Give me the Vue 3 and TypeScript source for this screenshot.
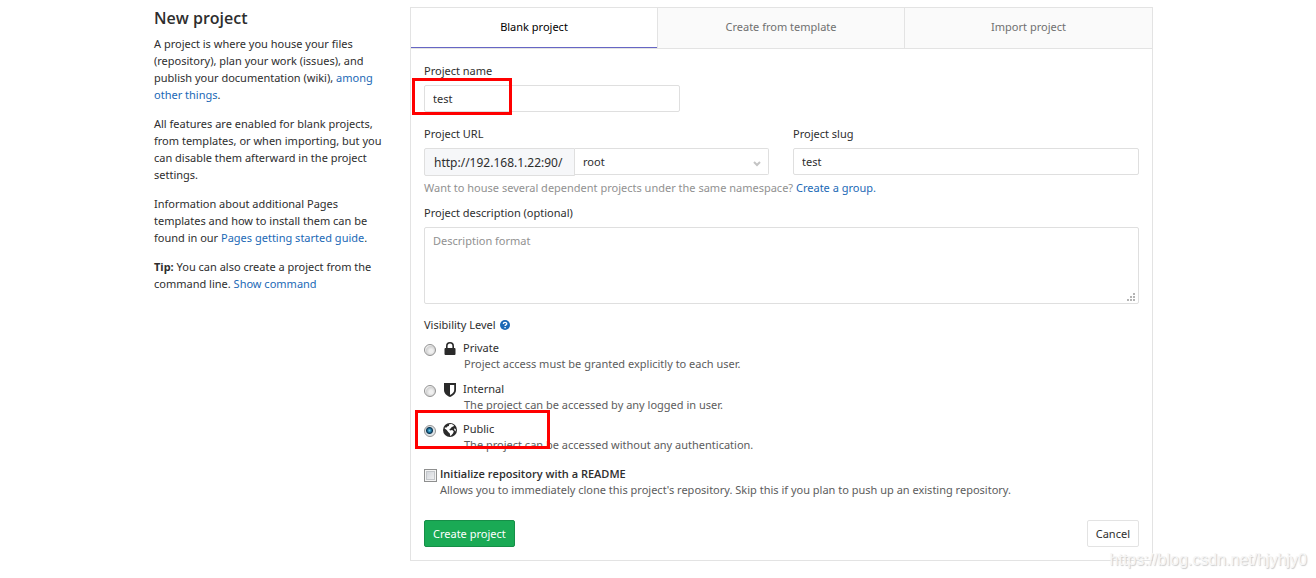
<script setup lang="ts">
import { ref } from 'vue'

interface VisibilityOption {
  value: string
  title: string
  description: string
}

const tabs: string[] = ['Blank project', 'Create from template', 'Import project']
const activeTab = ref<string>(tabs[0])

const projectName = ref<string>('test')
const projectSlug = ref<string>('test')
const namespace = ref<string>('root')
const description = ref<string>('')
const visibility = ref<string>('public')
const withReadme = ref<boolean>(false)

const options: VisibilityOption[] = [
  { value: 'private', title: 'Private', description: 'Project access must be granted explicitly to each user.' },
  { value: 'internal', title: 'Internal', description: 'The project can be accessed by any logged in user.' },
  { value: 'public', title: 'Public', description: 'The project can be accessed without any authentication.' },
]
</script>

<template>
  <div class="page">
    <main class="layout">
      <aside class="intro">
        <h1>New project</h1>
        <p>
          A project is where you house your files (repository), plan your work (issues), and publish your
          documentation (wiki), <a href="#">among other things</a>.
        </p>
        <p>
          All features are enabled for blank projects, from templates, or when importing, but you can disable
          them afterward in the project settings.
        </p>
        <p>
          Information about additional Pages templates and how to install them can be found in our
          <a href="#">Pages getting started guide</a>.
        </p>
        <p><strong>Tip:</strong> You can also create a project from the command line. <a href="#">Show command</a></p>
      </aside>

      <section class="panel">
        <div class="tabs" role="tablist">
          <button
            v-for="tab in tabs"
            :key="tab"
            type="button"
            role="tab"
            class="tab"
            :class="{ active: tab === activeTab }"
            :aria-selected="tab === activeTab"
            @click="activeTab = tab"
          >{{ tab }}</button>
        </div>

        <form class="body" @submit.prevent>
          <div class="field name-field">
            <label for="name">Project name</label>
            <input id="name" v-model="projectName" class="control" type="text" />
            <span class="mark mark-name"></span>
          </div>

          <div class="row">
            <div class="field url-field">
              <label for="namespace">Project URL</label>
              <div class="group">
                <span class="prefix">http://192.168.1.22:90/</span>
                <div class="select-wrap">
                  <select id="namespace" v-model="namespace" class="control">
                    <option value="root">root</option>
                  </select>
                  <svg class="chevron" viewBox="0 0 8 6" aria-hidden="true">
                    <path d="M1 1l3 3 3-3" fill="none" stroke="#c4c4c4" stroke-width="2" />
                  </svg>
                </div>
              </div>
            </div>
            <div class="field slug-field">
              <label for="slug">Project slug</label>
              <input id="slug" v-model="projectSlug" class="control" type="text" />
            </div>
          </div>

          <p class="help">
            Want to house several dependent projects under the same namespace? <a href="#">Create a group.</a>
          </p>

          <div class="field area-field">
            <label for="description">Project description (optional)</label>
            <textarea id="description" v-model="description" class="control" placeholder="Description format"></textarea>
            <svg class="grip" viewBox="0 0 8 8" aria-hidden="true">
              <path
                d="M6 0h2v2H6zM3 3h2v2H3zM6 3h2v2H6zM0 6h2v2H0zM3 6h2v2H3zM6 6h2v2H6z"
                fill="#b4b4b4"
              />
            </svg>
          </div>

          <fieldset class="visibility">
            <legend>
              Visibility Level
              <a href="#" class="question" aria-label="Help">
                <svg viewBox="0 0 10 10" aria-hidden="true">
                  <circle cx="5" cy="5" r="5" fill="#1b69b6" />
                  <path d="M3.3 3.9C3.4 1.8 6.8 1.9 6.7 3.9 6.7 4.9 5.1 4.9 5.1 6.1" fill="none" stroke="#fff" stroke-width="1.4" />
                  <path d="M4.4 6.9h1.4v1.3H4.4z" fill="#fff" />
                </svg>
              </a>
            </legend>
            <div v-for="option in options" :key="option.value" class="option">
              <input :id="option.value" v-model="visibility" type="radio" name="visibility" :value="option.value" />
              <svg v-if="option.value === 'private'" class="icon" viewBox="0 0 14 14" aria-hidden="true">
                <path
                  fill="#2a2a2a"
                  fill-rule="evenodd"
                  d="M2.500 6H3V4.200a4 4.200 0 0 1 8 0V6h.5q1 0 1 1v5q0 1-1 1h-9q-1 0-1-1V7q0-1 1-1zM4.600 6h4.800V4.200a2.400 2.600 0 0 0-4.800 0z"
                />
              </svg>
              <svg v-else-if="option.value === 'internal'" class="icon" viewBox="0 0 14 14" aria-hidden="true">
                <path
                  fill="#2a2a2a"
                  fill-rule="evenodd"
                  d="M1 0h12v7c0 3.500-2.500 5.500-6 7-3.500-1.500-6-3.500-6-7zM7 2v10c2.600-1.300 4.200-2.800 4.200-5V2z"
                />
              </svg>
              <svg v-else class="icon" viewBox="0 0 14 14" aria-hidden="true">
                <circle cx="7" cy="7" r="7" fill="#2a2a2a" />
                <path
                  fill="#fff"
                  d="M6.200 1.300l2.300-.3 2.500 1.200-.7 1.300-1.600.5-.8 1.300-1.500 1 .6 1.200 2.200-.4 1.600 1.400-.9 1.900-1.600 1.800-.9 1-.6-2.700-1.600-1.500-1.500-2-2-1.500.3-1.400 1 .8 1.300-1.500 1.600-.5z"
                />
                <path fill="#fff" d="M11.300 5.200l1.500 1-.1 2.300-1.500-1.400z" />
              </svg>
              <label :for="option.value">
                <span class="title">{{ option.title }}</span>
                <span class="desc">{{ option.description }}</span>
              </label>
              <span v-if="option.value === 'public'" class="mark mark-public"></span>
            </div>
          </fieldset>

          <div class="readme">
            <input id="readme" v-model="withReadme" type="checkbox" />
            <label for="readme">
              <strong>Initialize repository with a README</strong>
              <span class="readme-desc">Allows you to immediately clone this project's repository. Skip this if you plan to push up an existing repository.</span>
            </label>
          </div>

          <div class="actions">
            <button type="submit" class="btn primary">Create project</button>
            <button type="button" class="btn">Cancel</button>
          </div>
        </form>
      </section>
    </main>
    <span class="watermark">https://blog.csdn.net/hjyhjy0</span>
  </div>
</template>

<style>
body {
  margin: 0;
  background: #fff;
}
</style>

<style scoped>
.page,
.page * {
  box-sizing: border-box;
}
.page {
  position: relative;
  padding: 7px 9px 16px 0;
  color: #2e2e2e;
  font-family: 'Noto Sans', 'Open Sans', sans-serif;
  font-size: 11px;
  line-height: 16px;
}
button,
input,
select,
textarea {
  font: inherit;
  color: inherit;
}
a {
  color: #1b69b6;
  text-decoration: none;
}
.layout {
  display: flex;
  max-width: 999px;
  margin: 0 auto;
}
.intro {
  flex: 0 0 256px;
  padding-right: 26px;
  line-height: 17px;
}
.intro h1 {
  margin: 0 0 6px;
  font-family: 'Open Sans', 'Noto Sans', sans-serif;
  font-size: 16px;
  line-height: 22px;
  font-weight: 600;
}
.intro p {
  margin: 0 0 12px;
}
.panel {
  flex: 1;
  min-width: 0;
  border: 1px solid #e3e3e3;
}
.tabs {
  display: grid;
  grid-template-columns: repeat(3, 1fr);
  border-bottom: 1px solid #e3e3e3;
}
.tab {
  height: 40px;
  padding: 0 0 2px;
  border: 0;
  border-right: 1px solid #e3e3e3;
  background: #fafafa;
  color: #707070;
}
.tab:last-child {
  border-right: 0;
}
.tab.active {
  background: linear-gradient(#6666c4, #6666c4) bottom / 100% 1px no-repeat #fff;
  color: #000;
}
.body {
  padding: 14px 13px 13px;
}
.field {
  position: relative;
  display: flex;
  flex-direction: column;
  gap: 6px;
}
.control {
  display: block;
  width: 100%;
  height: 27px;
  margin: 0;
  padding: 0 8px;
  border: 1px solid #dfdfdf;
  border-radius: 2px;
  background: #fff;
  outline: 0;
}
.name-field {
  width: 256px;
  margin-bottom: 14px;
}
.row {
  display: flex;
  gap: 24px;
}
.url-field {
  flex: 1 1 345px;
}
.slug-field {
  flex: 1 1 346px;
}
.group {
  display: flex;
}
.prefix {
  flex: 0 0 151px;
  height: 28px;
  padding: 0 9px;
  border: 1px solid #dfdfdf;
  border-radius: 2px 0 0 2px;
  background: #f6f7f9;
  font-size: 12px;
  line-height: 28px;
}
.select-wrap {
  position: relative;
  flex: 1;
}
.select-wrap .control {
  appearance: none;
  border-left: 0;
  border-radius: 0 2px 2px 0;
}
.chevron {
  position: absolute;
  right: 8px;
  top: 13px;
  width: 8px;
  height: 6px;
}
.help {
  margin: 4px 0 9px;
  color: #919191;
}
textarea.control {
  height: 77px;
  padding: 5px 8px;
  resize: none;
}
textarea::placeholder {
  color: #919191;
  opacity: 1;
}
.grip {
  position: absolute;
  right: 4px;
  bottom: 3px;
  width: 8px;
  height: 8px;
}
.visibility {
  margin: 13px 0 13px;
  padding: 0;
  border: 0;
}
.visibility legend {
  display: flex;
  align-items: center;
  gap: 4px;
  margin-bottom: 7px;
  padding: 0;
}
.question,
.question svg {
  display: block;
  width: 10px;
  height: 10px;
}
.option {
  position: relative;
  display: flex;
  align-items: flex-start;
}
.option + .option {
  margin-top: 9px;
}
.option + .option + .option {
  margin-top: 8px;
}
.option label,
.readme label {
  display: flex;
  flex-direction: column;
}
.option input {
  appearance: none;
  flex: none;
  width: 12px;
  height: 12px;
  margin: 4px 7px 0 0;
  border: 1px solid #929292;
  border-radius: 50%;
  background: radial-gradient(circle at 60% 60%, #f0f0f0 20%, #d2d2d2 55%, #f4f4f4 70%);
}
.option input:checked {
  background: radial-gradient(circle at 45% 45%, #6fd0f5 0, #1a6a92 2px, #0c3350 3px, #d9e0e4 4px, #f4f4f4);
}
.icon {
  flex: none;
  width: 14px;
  height: 14px;
  margin: 2px 6px 0 0;
}
.desc {
  padding-left: 1px;
  color: #5c5c5c;
}
.readme {
  display: flex;
  align-items: flex-start;
  gap: 3px;
}
.readme input {
  appearance: none;
  flex: none;
  width: 13px;
  height: 13px;
  margin: 3px 0 0;
  border: 1px solid #8e8f8f;
  background: linear-gradient(135deg, #cbcfd5, #f6f6f6);
  box-shadow: inset 0 0 0 1px #f4f4f4, inset 0 0 0 2px #c3c6ca;
}
.readme strong {
  font-family: 'Open Sans', 'Noto Sans', sans-serif;
  font-weight: 600;
}
.readme-desc {
  color: #5c5c5c;
}
.actions {
  display: flex;
  justify-content: space-between;
  margin-top: 22px;
}
.btn {
  height: 27px;
  padding: 0 8px;
  border: 1px solid #e3e3e3;
  border-radius: 2px;
  background: #fff;
}
.btn.primary {
  border-color: #168f48;
  background: #1aaa55;
  color: #fff;
}
.mark {
  position: absolute;
  border: 3px solid #f00;
  pointer-events: none;
}
.mark-name {
  left: -12px;
  top: 15px;
  width: 100px;
  height: 37px;
}
.mark-public {
  left: -9px;
  top: -11px;
  width: 135px;
  height: 39px;
}
.watermark {
  position: absolute;
  right: 9px;
  bottom: 7px;
  color: #f6f6f6;
  font-family: 'Liberation Sans', Arial, sans-serif;
  font-size: 16px;
  line-height: 20px;
  text-shadow: 1px 1px 1px #ccc;
}
</style>
